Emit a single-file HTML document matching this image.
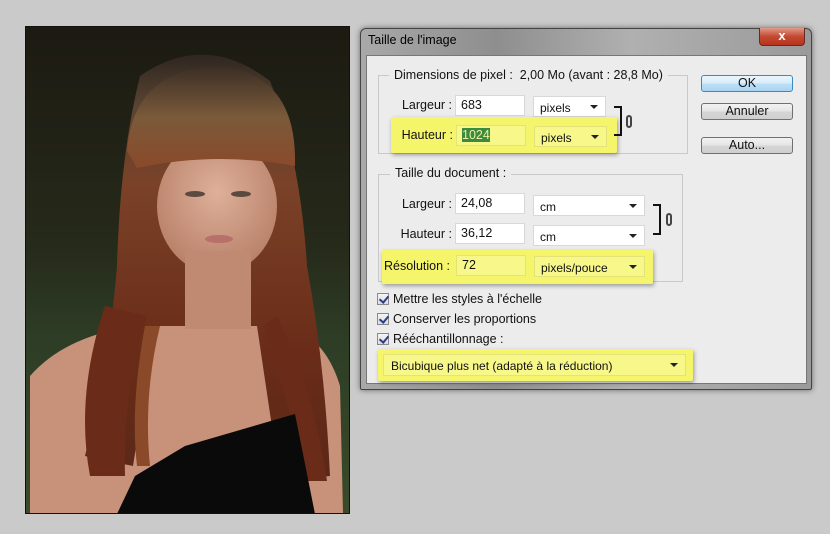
<!DOCTYPE html>
<html><head><meta charset="utf-8"><style>
*{margin:0;padding:0;box-sizing:border-box}
body{width:830px;height:534px;background:#cacaca;position:relative;overflow:hidden;font-family:"Liberation Sans",sans-serif;font-size:12px;color:#111}
.a{position:absolute}
.inp{position:absolute;background:#fff;border:1px solid #d8d8d8;height:21px;padding:2px 0 0 5px;font-size:12.5px}
.sel{position:absolute;background:#fff;border:1px solid #d8d8d8;height:21px;padding:4px 0 0 6px;font-size:12px}
.sel:after{content:"";position:absolute;right:7px;top:8px;border-left:4px solid transparent;border-right:4px solid transparent;border-top:4px solid #222}
.lbl{position:absolute;text-align:right;font-size:12.5px}
.btn{position:absolute;left:701px;width:92px;height:17px;border:1px solid #707070;border-radius:3px;background:linear-gradient(#f2f2f2,#e4e4e4 50%,#d5d5d5 51%,#cfcfcf);text-align:center;font-size:12.5px;line-height:15px}
.grp{position:absolute;border:1px solid #c9c9c9}
.leg{position:absolute;background:#ececec;padding:0 5px;font-size:12.5px}
.hl{position:absolute;background:#f5f56b;box-shadow:1px 2px 4px rgba(0,0,0,.35);border-radius:2px}
.hl .inp,.hl .sel{background:#f7f78a;border-color:#e3e37a}
.cb{position:absolute;left:377px;width:12px;height:12px;border:1px solid #8a8a8a;background:linear-gradient(#f4f4f4,#dcdcdc)}
.cb:after{content:"";position:absolute;left:3px;top:0px;width:4px;height:7px;border-right:2px solid #2b3e8a;border-bottom:2px solid #2b3e8a;transform:rotate(40deg)}
.ct{position:absolute;left:393px;font-size:12.5px}
</style></head><body>
<svg class="a" style="left:25px;top:26px" width="325" height="488" viewBox="0 0 325 488">
<defs>
<linearGradient id="bg" x1="0" y1="0" x2="0" y2="1"><stop offset="0" stop-color="#1c1a12"/><stop offset=".45" stop-color="#262a1a"/><stop offset=".65" stop-color="#2e3e26"/><stop offset="1" stop-color="#3a4a2a"/></linearGradient>
<linearGradient id="hair" x1="0" y1="0" x2="0" y2="1"><stop offset="0" stop-color="#2e2620"/><stop offset=".12" stop-color="#5a4432"/><stop offset=".3" stop-color="#7a4228"/><stop offset=".7" stop-color="#6a2c18"/><stop offset="1" stop-color="#5a2818"/></linearGradient>
<linearGradient id="bang" x1="0" y1="0" x2="0" y2="1"><stop offset="0" stop-color="#3a2e24"/><stop offset=".5" stop-color="#7a5a3a"/><stop offset="1" stop-color="#8a4a2a"/></linearGradient>
<radialGradient id="skin" cx=".5" cy=".4" r=".6"><stop offset="0" stop-color="#deb09a"/><stop offset="1" stop-color="#b88068"/></radialGradient>
</defs>
<rect width="325" height="488" fill="url(#bg)"/>
<path d="M5 350 Q40 310 110 300 L260 300 Q300 310 315 360 L318 488 L5 488 Z" fill="#c8927a"/>
<path d="M115 50 Q180 5 245 55 Q275 130 282 240 Q300 340 305 450 L255 455 L232 300 L130 300 L108 440 L60 430 Q85 330 92 240 Q95 130 115 50 Z" fill="url(#hair)"/>
<ellipse cx="192" cy="180" rx="60" ry="68" fill="url(#skin)"/>
<rect x="160" y="225" width="66" height="78" fill="#c08a72"/>
<path d="M102 125 Q108 45 190 40 Q268 45 270 130 L270 140 Q190 125 112 142 Z" fill="url(#bang)"/>
<path d="M80 280 Q50 370 65 450 L100 450 Q98 360 122 290 Z" fill="#6a2c18"/>
<path d="M252 290 Q290 370 302 455 L282 455 Q265 380 238 300 Z" fill="#6a2c18"/>
<path d="M120 300 Q105 380 112 440 L125 440 Q118 370 135 300 Z" fill="#8a4a2a"/>
<path d="M92 488 L110 450 L160 420 L270 388 L290 488 Z" fill="#0a0a0a"/>
<ellipse cx="170" cy="168" rx="10" ry="3" fill="#5a4a40"/><ellipse cx="216" cy="168" rx="10" ry="3" fill="#5a4a40"/>
<ellipse cx="194" cy="213" rx="14" ry="4" fill="#b8706a"/>
<rect width="325" height="488" fill="none" stroke="#111" stroke-width="2"/>
</svg>

<div class="a" style="left:360px;top:28px;width:452px;height:362px;border:1px solid #444;border-radius:6px 6px 2px 2px;background:linear-gradient(90deg,#a9a9a9,#8e8e8e 30%,#b0b0b0 60%,#9a9a9a);box-shadow:0 0 6px rgba(0,0,0,.5)"></div>
<div class="a" style="left:368px;top:33px;font-size:12.5px;color:#000">Taille de l'image</div>
<div class="a" style="left:759px;top:28px;width:46px;height:18px;border:1px solid #6a2a20;border-top:none;border-radius:0 0 4px 4px;background:linear-gradient(#e09a88,#c44a32 50%,#b8321c);color:#fff;font-weight:bold;text-align:center;font-size:13px;line-height:16px">x</div>
<div class="a" style="left:366px;top:55px;width:441px;height:329px;background:#ececec;border:1px solid #777"></div>

<div class="grp" style="left:378px;top:75px;width:310px;height:79px"></div>
<div class="leg" style="left:389px;top:68px">Dimensions de pixel :&nbsp; 2,00 Mo (avant : 28,8 Mo)</div>
<div class="lbl" style="left:390px;width:62px;top:98px">Largeur :</div>
<div class="inp" style="left:455px;top:95px;width:70px">683</div>
<div class="sel" style="left:533px;top:96px;width:73px">pixels</div>
<div class="hl" style="left:391px;top:117px;width:226px;height:36px">
 <div class="lbl" style="left:0;width:62px;top:11px">Hauteur :</div>
 <div class="inp" style="left:65px;top:8px;width:70px;height:21px"><span style="background:#3c8a3c;color:#e8f0a0">1024</span></div>
 <div class="sel" style="left:143px;top:9px;width:73px">pixels</div>
</div>
<div class="a" style="left:614px;top:106px;width:8px;height:30px;border:2px solid #111;border-left:none"></div>
<div class="a" style="left:626px;top:115px;width:6px;height:13px;border:2px solid #444;border-radius:3px"></div>

<div class="btn" style="top:75px;border-color:#3a8ac8;background:linear-gradient(#eaf6fd,#d6ecfa 50%,#bde0f7 51%,#a8d4f2)">OK</div>
<div class="btn" style="top:103px">Annuler</div>
<div class="btn" style="top:137px">Auto...</div>

<div class="grp" style="left:378px;top:174px;width:305px;height:108px"></div>
<div class="leg" style="left:390px;top:166px">Taille du document :</div>
<div class="lbl" style="left:390px;width:62px;top:197px">Largeur :</div>
<div class="inp" style="left:455px;top:193px;width:70px">24,08</div>
<div class="sel" style="left:533px;top:195px;width:112px">cm</div>
<div class="lbl" style="left:390px;width:62px;top:227px">Hauteur :</div>
<div class="inp" style="left:455px;top:223px;width:70px">36,12</div>
<div class="sel" style="left:533px;top:225px;width:112px">cm</div>
<div class="a" style="left:653px;top:204px;width:8px;height:31px;border:2px solid #111;border-left:none"></div>
<div class="a" style="left:666px;top:213px;width:6px;height:13px;border:2px solid #444;border-radius:3px"></div>
<div class="hl" style="left:382px;top:250px;width:271px;height:34px">
 <div class="lbl" style="left:0;width:68px;top:9px">Résolution :</div>
 <div class="inp" style="left:74px;top:5px;width:70px">72</div>
 <div class="sel" style="left:152px;top:6px;width:111px">pixels/pouce</div>
</div>

<div class="cb" style="top:293px"></div><div class="ct" style="top:292px">Mettre les styles à l'échelle</div>
<div class="cb" style="top:313px"></div><div class="ct" style="top:312px">Conserver les proportions</div>
<div class="cb" style="top:333px"></div><div class="ct" style="top:332px">Rééchantillonnage :</div>
<div class="hl" style="left:378px;top:349px;width:315px;height:32px">
 <div class="sel" style="left:5px;top:5px;width:303px;height:22px;padding-left:7px">Bicubique plus net (adapté à la réduction)</div>
</div>
</body></html>
